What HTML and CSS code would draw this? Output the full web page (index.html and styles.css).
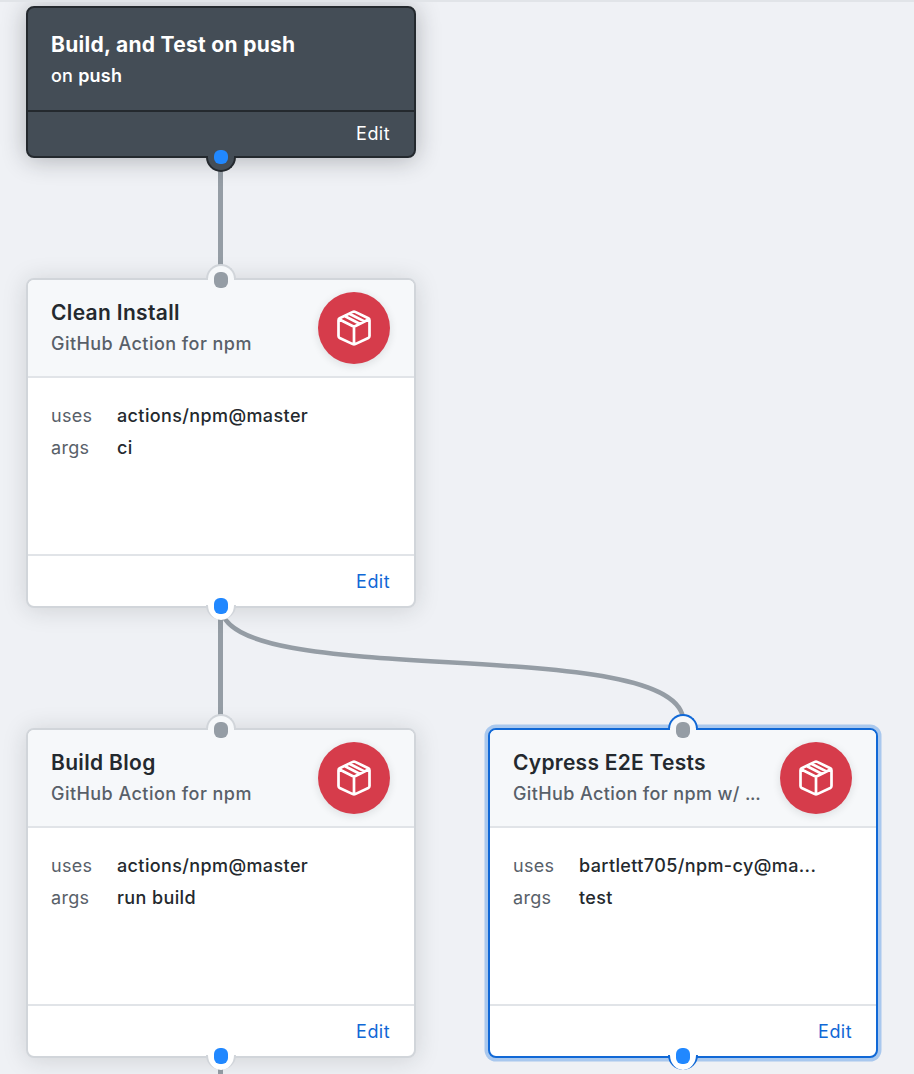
FILE: index.html
```html
<!DOCTYPE html>
<html lang="en">
<head>
<meta charset="utf-8">
<title>Workflow editor</title>
<link rel="stylesheet" href="styles.css">
</head>
<body>
<svg width="0" height="0" class="defs">
  <symbol id="package" viewBox="0 0 34 36">
    <path d="M15.8 1.9 Q17 1.3 18.2 1.9 L31.3 8.2 Q32.5 8.9 32.5 10.2 V26 Q32.5 27.3 31.3 28 L18.2 34.1 Q17 34.7 15.8 34.1 L2.7 28 Q1.5 27.3 1.5 26 V10.2 Q1.5 8.9 2.7 8.2 Z M2 9.2 L17 16.8 L32 9.2 M17 16.8 V34.2 M7.6 6 L22.6 13.8 M12.4 3.7 L27.4 11.4"/>
  </symbol>
</svg>
<main class="canvas">
  <svg class="edges" width="914" height="1074">
    <path d="M220.5 158V280M220.5 606V730M220.5 1056V1090"/>
    <path class="curve" d="M221 606C221 693 683.5 631 683.5 722"/>
  </svg>

  <section class="node trigger">
    <header class="head">
      <div class="titles"><h2>Build, and Test on push</h2><p>on <b>push</b></p></div>
    </header>
    <footer class="foot"><a>Edit</a></footer>
    <i class="port out"></i>
  </section>

  <section class="node action install">
    <header class="head">
      <div class="titles"><h2>Clean Install</h2><p>GitHub Action for npm</p></div>
      <span class="badge"><svg><use href="#package"/></svg></span>
    </header>
    <dl class="props"><dt>uses</dt><dd>actions/npm@master</dd><dt>args</dt><dd>ci</dd></dl>
    <footer class="foot"><a>Edit</a></footer>
    <i class="port in"></i><i class="port out"></i>
  </section>

  <section class="node action build">
    <header class="head">
      <div class="titles"><h2>Build Blog</h2><p>GitHub Action for npm</p></div>
      <span class="badge"><svg><use href="#package"/></svg></span>
    </header>
    <dl class="props"><dt>uses</dt><dd>actions/npm@master</dd><dt>args</dt><dd>run build</dd></dl>
    <footer class="foot"><a>Edit</a></footer>
    <i class="port in"></i><i class="port out"></i>
  </section>

  <section class="node action cypress selected">
    <header class="head">
      <div class="titles"><h2>Cypress E2E Tests</h2><p>GitHub Action for npm w/ <span class="dots">...</span></p></div>
      <span class="badge"><svg><use href="#package"/></svg></span>
    </header>
    <dl class="props"><dt>uses</dt><dd>bartlett705/npm-cy@ma...</dd><dt>args</dt><dd>test</dd></dl>
    <footer class="foot"><a>Edit</a></footer>
    <i class="port in"></i><i class="port out"></i>
  </section>
</main>
</body>
</html>
```

FILE: styles.css
```css
* { box-sizing: border-box; }
body { margin: 0; font-family: Inter, "Liberation Sans", sans-serif; color: #24292e; overflow: hidden; }
h2, p, dl, dd { margin: 0; }
.defs { position: absolute; }
.canvas { position: relative; width: 914px; height: 1074px; overflow: hidden; background: #eff1f5; border-top: 2px solid #e1e4e8; }
.edges { position: absolute; left: 0; top: -2px; fill: none; stroke: #959da5; stroke-width: 5; }
.curve { stroke-width: 4.5; }

.node {
  --line: #d1d5da;
  --fill: #fff;
  position: absolute;
  display: flex;
  flex-direction: column;
  width: 390px;
  height: 330px;
  border: 2px solid var(--line);
  border-radius: 8px;
  background: var(--fill);
  box-shadow: 0 2px 24px rgba(27, 31, 35, .15);
}
.trigger { --line: #24292e; --fill: #444d56; left: 26px; top: 4px; height: 152px; color: #fff; box-shadow: 0 2px 24px rgba(27, 31, 35, .3); }
.install { left: 26px; top: 276px; }
.build { left: 26px; top: 726px; }
.cypress { left: 488px; top: 726px; }
.selected { --line: #1068d6; box-shadow: 0 0 0 3.5px #a9c8ee; }

.head { display: flex; justify-content: space-between; height: 98px; padding: 12px 24px 0 23px; border-bottom: 2px solid #e1e4e8; border-radius: 6px 6px 0 0; background: #f6f8fa; }
.trigger .head { height: 104px; background: none; border-color: var(--line); }
.titles { padding-top: 5px; white-space: nowrap; }
.trigger .titles { padding-top: 9px; }
h2 { font-size: 21px; line-height: 32px; font-weight: 600; letter-spacing: .33px; }
.trigger h2 { font-weight: 700; letter-spacing: .29px; }
.cypress h2 { letter-spacing: .26px; }
.titles p { font-size: 18px; line-height: 30px; font-weight: 500; color: #586069; letter-spacing: .45px; }
.trigger .titles p { color: #fff; letter-spacing: .22px; }
.cypress .titles p { letter-spacing: .38px; }
.titles b { font-weight: 600; }
.cypress .dots { letter-spacing: -.4px; }

.badge { display: grid; place-items: center; flex: none; width: 72px; height: 72px; border-radius: 50%; background: #d63c4b; box-shadow: 0 2px 8px rgba(27, 31, 35, .12); }
.badge svg { width: 34px; height: 36px; fill: none; stroke: #fff; stroke-width: 2.7; stroke-linejoin: round; }

.props { display: grid; grid-template-columns: 66px 1fr; grid-auto-rows: 32px; flex: 1; padding: 22px 0 0 23px; font-size: 18px; line-height: 32px; white-space: nowrap; letter-spacing: .3px; }
dt { color: #586069; }
dd { font-weight: 500; letter-spacing: .38px; }
.foot { display: flex; justify-content: flex-end; height: 52px; padding-right: 24px; border-top: 2px solid #e1e4e8; font-size: 18px; line-height: 52px; letter-spacing: .45px; color: #1068d6; }
.trigger .foot { height: 44px; line-height: 44px; border: 0; color: #fff; }

.port { position: absolute; left: 178px; width: 30px; height: 15px; border: 2px solid var(--line); background: var(--fill); }
.in { top: -16px; border-bottom: 0; border-radius: 15px 15px 0 0; background: #f6f8fa; }
.out { bottom: -14px; border-top: 0; border-radius: 0 0 15px 15px; }
.action .out { border-bottom: 0; }
.trigger .out { bottom: -16px; }
.port::after { content: ""; position: absolute; left: 6px; width: 14px; height: 16px; border-radius: 6px; background: #2188ff; }
.in::after { top: 6px; background: #959da5; }
.port::before { content: ""; position: absolute; left: 0; width: 26px; height: 4px; background: inherit; }
.in::before { top: 12px; }
.out::before { top: -3px; }
.out::after { top: -7px; }
.trigger .out::after { height: 14px; }
```
